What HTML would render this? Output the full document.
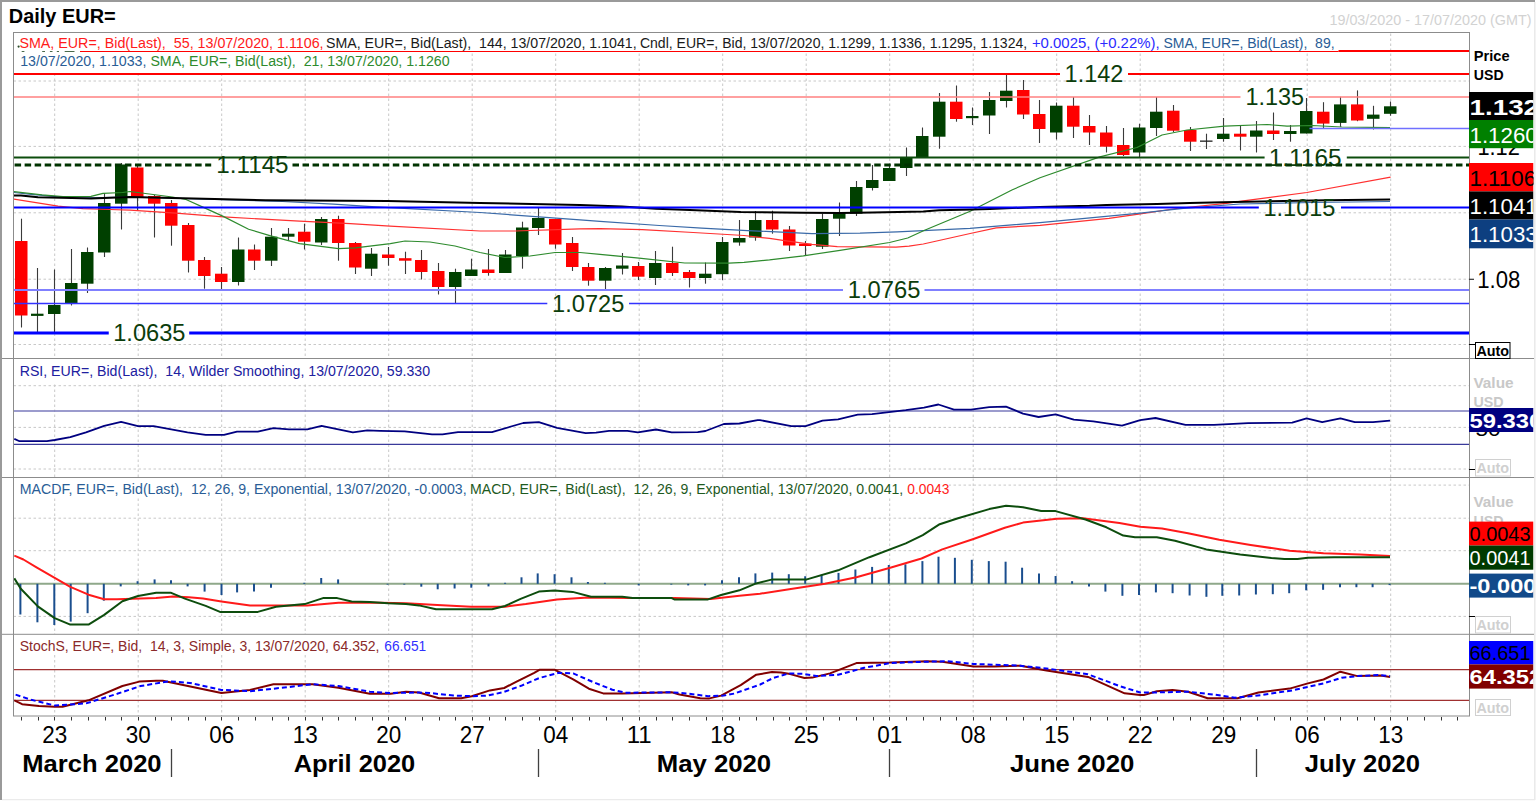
<!DOCTYPE html>
<html><head><meta charset="utf-8"><title>Daily EUR=</title>
<style>
html,body{margin:0;padding:0;background:#fff;width:1536px;height:801px;overflow:hidden}
svg{display:block;font-family:"Liberation Sans", sans-serif}
</style></head><body>
<svg width="1536" height="801" viewBox="0 0 1536 801">

<rect x="0.0" y="0.0" width="1536.0" height="801.0" fill="#ffffff"/>
<rect x="0.0" y="0.0" width="1535.0" height="2.0" fill="#9a9a9a"/>
<rect x="0.0" y="0.0" width="2.0" height="800.0" fill="#9a9a9a"/>
<line x1="1534.8" y1="2" x2="1534.8" y2="800" stroke="#e8e8e8" stroke-width="1.4"/>
<line x1="2" y1="799.6" x2="1535" y2="799.6" stroke="#ebebeb" stroke-width="1.3"/>
<text x="8.8" y="23.4" font-size="20.3" fill="#000000" font-weight="bold" textLength="106.9" lengthAdjust="spacingAndGlyphs" xml:space="preserve">Daily EUR=</text>
<text x="1329.4" y="25.0" font-size="14.8" fill="#d2d2d2" textLength="202.2" lengthAdjust="spacingAndGlyphs" xml:space="preserve">19/03/2020 - 17/07/2020 (GMT)</text>
<line x1="54.7" y1="33.5" x2="54.7" y2="358.5" stroke="#c8c8c8" stroke-width="1" stroke-dasharray="2.5,2.5"/>
<line x1="138.2" y1="33.5" x2="138.2" y2="358.5" stroke="#c8c8c8" stroke-width="1" stroke-dasharray="2.5,2.5"/>
<line x1="221.7" y1="33.5" x2="221.7" y2="358.5" stroke="#c8c8c8" stroke-width="1" stroke-dasharray="2.5,2.5"/>
<line x1="305.2" y1="33.5" x2="305.2" y2="358.5" stroke="#c8c8c8" stroke-width="1" stroke-dasharray="2.5,2.5"/>
<line x1="388.7" y1="33.5" x2="388.7" y2="358.5" stroke="#c8c8c8" stroke-width="1" stroke-dasharray="2.5,2.5"/>
<line x1="472.2" y1="33.5" x2="472.2" y2="358.5" stroke="#c8c8c8" stroke-width="1" stroke-dasharray="2.5,2.5"/>
<line x1="555.7" y1="33.5" x2="555.7" y2="358.5" stroke="#c8c8c8" stroke-width="1" stroke-dasharray="2.5,2.5"/>
<line x1="639.2" y1="33.5" x2="639.2" y2="358.5" stroke="#c8c8c8" stroke-width="1" stroke-dasharray="2.5,2.5"/>
<line x1="722.7" y1="33.5" x2="722.7" y2="358.5" stroke="#c8c8c8" stroke-width="1" stroke-dasharray="2.5,2.5"/>
<line x1="806.2" y1="33.5" x2="806.2" y2="358.5" stroke="#c8c8c8" stroke-width="1" stroke-dasharray="2.5,2.5"/>
<line x1="889.7" y1="33.5" x2="889.7" y2="358.5" stroke="#c8c8c8" stroke-width="1" stroke-dasharray="2.5,2.5"/>
<line x1="973.2" y1="33.5" x2="973.2" y2="358.5" stroke="#c8c8c8" stroke-width="1" stroke-dasharray="2.5,2.5"/>
<line x1="1056.7" y1="33.5" x2="1056.7" y2="358.5" stroke="#c8c8c8" stroke-width="1" stroke-dasharray="2.5,2.5"/>
<line x1="1140.2" y1="33.5" x2="1140.2" y2="358.5" stroke="#c8c8c8" stroke-width="1" stroke-dasharray="2.5,2.5"/>
<line x1="1223.7" y1="33.5" x2="1223.7" y2="358.5" stroke="#c8c8c8" stroke-width="1" stroke-dasharray="2.5,2.5"/>
<line x1="1307.2" y1="33.5" x2="1307.2" y2="358.5" stroke="#c8c8c8" stroke-width="1" stroke-dasharray="2.5,2.5"/>
<line x1="1390.7" y1="33.5" x2="1390.7" y2="358.5" stroke="#c8c8c8" stroke-width="1" stroke-dasharray="2.5,2.5"/>
<line x1="54.7" y1="359.5" x2="54.7" y2="477.5" stroke="#c8c8c8" stroke-width="1" stroke-dasharray="2.5,2.5"/>
<line x1="138.2" y1="359.5" x2="138.2" y2="477.5" stroke="#c8c8c8" stroke-width="1" stroke-dasharray="2.5,2.5"/>
<line x1="221.7" y1="359.5" x2="221.7" y2="477.5" stroke="#c8c8c8" stroke-width="1" stroke-dasharray="2.5,2.5"/>
<line x1="305.2" y1="359.5" x2="305.2" y2="477.5" stroke="#c8c8c8" stroke-width="1" stroke-dasharray="2.5,2.5"/>
<line x1="388.7" y1="359.5" x2="388.7" y2="477.5" stroke="#c8c8c8" stroke-width="1" stroke-dasharray="2.5,2.5"/>
<line x1="472.2" y1="359.5" x2="472.2" y2="477.5" stroke="#c8c8c8" stroke-width="1" stroke-dasharray="2.5,2.5"/>
<line x1="555.7" y1="359.5" x2="555.7" y2="477.5" stroke="#c8c8c8" stroke-width="1" stroke-dasharray="2.5,2.5"/>
<line x1="639.2" y1="359.5" x2="639.2" y2="477.5" stroke="#c8c8c8" stroke-width="1" stroke-dasharray="2.5,2.5"/>
<line x1="722.7" y1="359.5" x2="722.7" y2="477.5" stroke="#c8c8c8" stroke-width="1" stroke-dasharray="2.5,2.5"/>
<line x1="806.2" y1="359.5" x2="806.2" y2="477.5" stroke="#c8c8c8" stroke-width="1" stroke-dasharray="2.5,2.5"/>
<line x1="889.7" y1="359.5" x2="889.7" y2="477.5" stroke="#c8c8c8" stroke-width="1" stroke-dasharray="2.5,2.5"/>
<line x1="973.2" y1="359.5" x2="973.2" y2="477.5" stroke="#c8c8c8" stroke-width="1" stroke-dasharray="2.5,2.5"/>
<line x1="1056.7" y1="359.5" x2="1056.7" y2="477.5" stroke="#c8c8c8" stroke-width="1" stroke-dasharray="2.5,2.5"/>
<line x1="1140.2" y1="359.5" x2="1140.2" y2="477.5" stroke="#c8c8c8" stroke-width="1" stroke-dasharray="2.5,2.5"/>
<line x1="1223.7" y1="359.5" x2="1223.7" y2="477.5" stroke="#c8c8c8" stroke-width="1" stroke-dasharray="2.5,2.5"/>
<line x1="1307.2" y1="359.5" x2="1307.2" y2="477.5" stroke="#c8c8c8" stroke-width="1" stroke-dasharray="2.5,2.5"/>
<line x1="1390.7" y1="359.5" x2="1390.7" y2="477.5" stroke="#c8c8c8" stroke-width="1" stroke-dasharray="2.5,2.5"/>
<line x1="54.7" y1="478.5" x2="54.7" y2="634" stroke="#c8c8c8" stroke-width="1" stroke-dasharray="2.5,2.5"/>
<line x1="138.2" y1="478.5" x2="138.2" y2="634" stroke="#c8c8c8" stroke-width="1" stroke-dasharray="2.5,2.5"/>
<line x1="221.7" y1="478.5" x2="221.7" y2="634" stroke="#c8c8c8" stroke-width="1" stroke-dasharray="2.5,2.5"/>
<line x1="305.2" y1="478.5" x2="305.2" y2="634" stroke="#c8c8c8" stroke-width="1" stroke-dasharray="2.5,2.5"/>
<line x1="388.7" y1="478.5" x2="388.7" y2="634" stroke="#c8c8c8" stroke-width="1" stroke-dasharray="2.5,2.5"/>
<line x1="472.2" y1="478.5" x2="472.2" y2="634" stroke="#c8c8c8" stroke-width="1" stroke-dasharray="2.5,2.5"/>
<line x1="555.7" y1="478.5" x2="555.7" y2="634" stroke="#c8c8c8" stroke-width="1" stroke-dasharray="2.5,2.5"/>
<line x1="639.2" y1="478.5" x2="639.2" y2="634" stroke="#c8c8c8" stroke-width="1" stroke-dasharray="2.5,2.5"/>
<line x1="722.7" y1="478.5" x2="722.7" y2="634" stroke="#c8c8c8" stroke-width="1" stroke-dasharray="2.5,2.5"/>
<line x1="806.2" y1="478.5" x2="806.2" y2="634" stroke="#c8c8c8" stroke-width="1" stroke-dasharray="2.5,2.5"/>
<line x1="889.7" y1="478.5" x2="889.7" y2="634" stroke="#c8c8c8" stroke-width="1" stroke-dasharray="2.5,2.5"/>
<line x1="973.2" y1="478.5" x2="973.2" y2="634" stroke="#c8c8c8" stroke-width="1" stroke-dasharray="2.5,2.5"/>
<line x1="1056.7" y1="478.5" x2="1056.7" y2="634" stroke="#c8c8c8" stroke-width="1" stroke-dasharray="2.5,2.5"/>
<line x1="1140.2" y1="478.5" x2="1140.2" y2="634" stroke="#c8c8c8" stroke-width="1" stroke-dasharray="2.5,2.5"/>
<line x1="1223.7" y1="478.5" x2="1223.7" y2="634" stroke="#c8c8c8" stroke-width="1" stroke-dasharray="2.5,2.5"/>
<line x1="1307.2" y1="478.5" x2="1307.2" y2="634" stroke="#c8c8c8" stroke-width="1" stroke-dasharray="2.5,2.5"/>
<line x1="1390.7" y1="478.5" x2="1390.7" y2="634" stroke="#c8c8c8" stroke-width="1" stroke-dasharray="2.5,2.5"/>
<line x1="54.7" y1="635" x2="54.7" y2="716" stroke="#c8c8c8" stroke-width="1" stroke-dasharray="2.5,2.5"/>
<line x1="138.2" y1="635" x2="138.2" y2="716" stroke="#c8c8c8" stroke-width="1" stroke-dasharray="2.5,2.5"/>
<line x1="221.7" y1="635" x2="221.7" y2="716" stroke="#c8c8c8" stroke-width="1" stroke-dasharray="2.5,2.5"/>
<line x1="305.2" y1="635" x2="305.2" y2="716" stroke="#c8c8c8" stroke-width="1" stroke-dasharray="2.5,2.5"/>
<line x1="388.7" y1="635" x2="388.7" y2="716" stroke="#c8c8c8" stroke-width="1" stroke-dasharray="2.5,2.5"/>
<line x1="472.2" y1="635" x2="472.2" y2="716" stroke="#c8c8c8" stroke-width="1" stroke-dasharray="2.5,2.5"/>
<line x1="555.7" y1="635" x2="555.7" y2="716" stroke="#c8c8c8" stroke-width="1" stroke-dasharray="2.5,2.5"/>
<line x1="639.2" y1="635" x2="639.2" y2="716" stroke="#c8c8c8" stroke-width="1" stroke-dasharray="2.5,2.5"/>
<line x1="722.7" y1="635" x2="722.7" y2="716" stroke="#c8c8c8" stroke-width="1" stroke-dasharray="2.5,2.5"/>
<line x1="806.2" y1="635" x2="806.2" y2="716" stroke="#c8c8c8" stroke-width="1" stroke-dasharray="2.5,2.5"/>
<line x1="889.7" y1="635" x2="889.7" y2="716" stroke="#c8c8c8" stroke-width="1" stroke-dasharray="2.5,2.5"/>
<line x1="973.2" y1="635" x2="973.2" y2="716" stroke="#c8c8c8" stroke-width="1" stroke-dasharray="2.5,2.5"/>
<line x1="1056.7" y1="635" x2="1056.7" y2="716" stroke="#c8c8c8" stroke-width="1" stroke-dasharray="2.5,2.5"/>
<line x1="1140.2" y1="635" x2="1140.2" y2="716" stroke="#c8c8c8" stroke-width="1" stroke-dasharray="2.5,2.5"/>
<line x1="1223.7" y1="635" x2="1223.7" y2="716" stroke="#c8c8c8" stroke-width="1" stroke-dasharray="2.5,2.5"/>
<line x1="1307.2" y1="635" x2="1307.2" y2="716" stroke="#c8c8c8" stroke-width="1" stroke-dasharray="2.5,2.5"/>
<line x1="1390.7" y1="635" x2="1390.7" y2="716" stroke="#c8c8c8" stroke-width="1" stroke-dasharray="2.5,2.5"/>
<line x1="13.5" y1="81.0" x2="1469.5" y2="81.0" stroke="#c8c8c8" stroke-width="1" stroke-dasharray="2.5,2.5"/>
<line x1="13.5" y1="146.4" x2="1469.5" y2="146.4" stroke="#c8c8c8" stroke-width="1" stroke-dasharray="2.5,2.5"/>
<line x1="13.5" y1="212.8" x2="1469.5" y2="212.8" stroke="#c8c8c8" stroke-width="1" stroke-dasharray="2.5,2.5"/>
<line x1="13.5" y1="279.2" x2="1469.5" y2="279.2" stroke="#c8c8c8" stroke-width="1" stroke-dasharray="2.5,2.5"/>
<line x1="13.5" y1="344.5" x2="1469.5" y2="344.5" stroke="#c8c8c8" stroke-width="1" stroke-dasharray="2.5,2.5"/>
<line x1="13.5" y1="385.7" x2="1469.5" y2="385.7" stroke="#c8c8c8" stroke-width="1" stroke-dasharray="2.5,2.5"/>
<line x1="13.5" y1="427.4" x2="1469.5" y2="427.4" stroke="#c8c8c8" stroke-width="1" stroke-dasharray="2.5,2.5"/>
<line x1="13.5" y1="469" x2="1469.5" y2="469" stroke="#c8c8c8" stroke-width="1" stroke-dasharray="2.5,2.5"/>
<line x1="13.5" y1="485.1" x2="1469.5" y2="485.1" stroke="#c8c8c8" stroke-width="1" stroke-dasharray="2.5,2.5"/>
<line x1="13.5" y1="518.2" x2="1469.5" y2="518.2" stroke="#c8c8c8" stroke-width="1" stroke-dasharray="2.5,2.5"/>
<line x1="13.5" y1="550.7" x2="1469.5" y2="550.7" stroke="#c8c8c8" stroke-width="1" stroke-dasharray="2.5,2.5"/>
<line x1="13.5" y1="616.4" x2="1469.5" y2="616.4" stroke="#c8c8c8" stroke-width="1" stroke-dasharray="2.5,2.5"/>
<defs><clipPath id="cp1"><rect x="14" y="33" width="1455" height="325"/></clipPath><clipPath id="cp2"><rect x="14" y="359" width="1455" height="118"/></clipPath><clipPath id="cp3"><rect x="14" y="478" width="1455" height="156"/></clipPath><clipPath id="cp4"><rect x="14" y="634" width="1455" height="82"/></clipPath></defs>
<g clip-path="url(#cp1)">
<line x1="80" y1="51.5" x2="1338.3" y2="51.5" stroke="#ff0000" stroke-width="1"/>
<line x1="1338.3" y1="51" x2="1469" y2="51" stroke="#ff0000" stroke-width="2"/>
<line x1="21.5" y1="218.7" x2="21.5" y2="327.5" stroke="#3a3a3a" stroke-width="1.1"/>
<rect x="15.0" y="241.0" width="12.5" height="74.5" fill="#ff0000"/>
<line x1="37.5" y1="268.0" x2="37.5" y2="332.0" stroke="#3a3a3a" stroke-width="1.1"/>
<rect x="31.0" y="313.7" width="12.5" height="2.2" fill="#004000"/>
<line x1="54.5" y1="269.5" x2="54.5" y2="332.0" stroke="#3a3a3a" stroke-width="1.1"/>
<rect x="48.0" y="305.0" width="12.5" height="9.0" fill="#004000"/>
<line x1="71.5" y1="249.0" x2="71.5" y2="305.5" stroke="#3a3a3a" stroke-width="1.1"/>
<rect x="65.0" y="283.0" width="12.5" height="20.5" fill="#004000"/>
<line x1="87.5" y1="247.5" x2="87.5" y2="293.0" stroke="#3a3a3a" stroke-width="1.1"/>
<rect x="81.0" y="252.0" width="12.5" height="31.7" fill="#004000"/>
<line x1="104.5" y1="193.0" x2="104.5" y2="257.0" stroke="#3a3a3a" stroke-width="1.1"/>
<rect x="98.0" y="203.0" width="12.5" height="49.5" fill="#004000"/>
<line x1="121.5" y1="163.0" x2="121.5" y2="229.5" stroke="#3a3a3a" stroke-width="1.1"/>
<rect x="115.0" y="164.5" width="12.5" height="39.2" fill="#004000"/>
<line x1="137.5" y1="164.5" x2="137.5" y2="210.5" stroke="#3a3a3a" stroke-width="1.1"/>
<rect x="131.0" y="167.5" width="12.5" height="30.0" fill="#ff0000"/>
<line x1="154.5" y1="195.0" x2="154.5" y2="237.5" stroke="#3a3a3a" stroke-width="1.1"/>
<rect x="148.0" y="196.0" width="12.5" height="7.7" fill="#ff0000"/>
<line x1="171.5" y1="200.0" x2="171.5" y2="245.7" stroke="#3a3a3a" stroke-width="1.1"/>
<rect x="165.0" y="203.0" width="12.5" height="22.7" fill="#ff0000"/>
<line x1="188.5" y1="223.0" x2="188.5" y2="272.5" stroke="#3a3a3a" stroke-width="1.1"/>
<rect x="182.0" y="225.0" width="12.5" height="35.7" fill="#ff0000"/>
<line x1="204.5" y1="257.0" x2="204.5" y2="288.7" stroke="#3a3a3a" stroke-width="1.1"/>
<rect x="198.0" y="260.0" width="12.5" height="16.0" fill="#ff0000"/>
<line x1="221.5" y1="267.0" x2="221.5" y2="290.0" stroke="#3a3a3a" stroke-width="1.1"/>
<rect x="215.0" y="273.7" width="12.5" height="8.3" fill="#ff0000"/>
<line x1="238.5" y1="237.5" x2="238.5" y2="285.5" stroke="#3a3a3a" stroke-width="1.1"/>
<rect x="232.0" y="249.5" width="12.5" height="32.5" fill="#004000"/>
<line x1="254.5" y1="244.5" x2="254.5" y2="270.0" stroke="#3a3a3a" stroke-width="1.1"/>
<rect x="248.0" y="249.5" width="12.5" height="11.2" fill="#ff0000"/>
<line x1="271.5" y1="228.0" x2="271.5" y2="266.0" stroke="#3a3a3a" stroke-width="1.1"/>
<rect x="265.0" y="236.7" width="12.5" height="24.0" fill="#004000"/>
<line x1="288.5" y1="228.0" x2="288.5" y2="240.0" stroke="#3a3a3a" stroke-width="1.1"/>
<rect x="282.0" y="233.7" width="12.5" height="3.0" fill="#004000"/>
<line x1="304.5" y1="223.7" x2="304.5" y2="249.5" stroke="#3a3a3a" stroke-width="1.1"/>
<rect x="298.0" y="231.7" width="12.5" height="10.0" fill="#ff0000"/>
<line x1="321.5" y1="217.0" x2="321.5" y2="245.0" stroke="#3a3a3a" stroke-width="1.1"/>
<rect x="315.0" y="219.0" width="12.5" height="23.5" fill="#004000"/>
<line x1="338.5" y1="215.7" x2="338.5" y2="260.7" stroke="#3a3a3a" stroke-width="1.1"/>
<rect x="332.0" y="219.0" width="12.5" height="24.0" fill="#ff0000"/>
<line x1="355.5" y1="242.0" x2="355.5" y2="274.0" stroke="#3a3a3a" stroke-width="1.1"/>
<rect x="349.0" y="243.0" width="12.5" height="24.5" fill="#ff0000"/>
<line x1="371.5" y1="248.0" x2="371.5" y2="276.0" stroke="#3a3a3a" stroke-width="1.1"/>
<rect x="365.0" y="253.7" width="12.5" height="15.0" fill="#004000"/>
<line x1="388.5" y1="247.0" x2="388.5" y2="265.7" stroke="#3a3a3a" stroke-width="1.1"/>
<rect x="382.0" y="254.5" width="12.5" height="3.5" fill="#ff0000"/>
<line x1="405.5" y1="251.7" x2="405.5" y2="274.0" stroke="#3a3a3a" stroke-width="1.1"/>
<rect x="399.0" y="258.2" width="12.5" height="2.5" fill="#ff0000"/>
<line x1="421.5" y1="250.0" x2="421.5" y2="279.5" stroke="#3a3a3a" stroke-width="1.1"/>
<rect x="415.0" y="260.0" width="12.5" height="12.0" fill="#ff0000"/>
<line x1="438.5" y1="263.0" x2="438.5" y2="294.5" stroke="#3a3a3a" stroke-width="1.1"/>
<rect x="432.0" y="271.0" width="12.5" height="16.0" fill="#ff0000"/>
<line x1="455.5" y1="268.7" x2="455.5" y2="303.0" stroke="#3a3a3a" stroke-width="1.1"/>
<rect x="449.0" y="272.0" width="12.5" height="15.0" fill="#004000"/>
<line x1="471.5" y1="258.7" x2="471.5" y2="276.0" stroke="#3a3a3a" stroke-width="1.1"/>
<rect x="465.0" y="269.5" width="12.5" height="6.5" fill="#004000"/>
<line x1="488.5" y1="249.0" x2="488.5" y2="275.7" stroke="#3a3a3a" stroke-width="1.1"/>
<rect x="482.0" y="269.5" width="12.5" height="3.5" fill="#ff0000"/>
<line x1="505.5" y1="250.0" x2="505.5" y2="273.0" stroke="#3a3a3a" stroke-width="1.1"/>
<rect x="499.0" y="254.5" width="12.5" height="18.5" fill="#004000"/>
<line x1="522.5" y1="221.7" x2="522.5" y2="268.7" stroke="#3a3a3a" stroke-width="1.1"/>
<rect x="516.0" y="227.5" width="12.5" height="28.5" fill="#004000"/>
<line x1="538.5" y1="208.0" x2="538.5" y2="235.0" stroke="#3a3a3a" stroke-width="1.1"/>
<rect x="532.0" y="218.0" width="12.5" height="10.0" fill="#004000"/>
<line x1="555.5" y1="218.7" x2="555.5" y2="248.7" stroke="#3a3a3a" stroke-width="1.1"/>
<rect x="549.0" y="219.0" width="12.5" height="25.5" fill="#ff0000"/>
<line x1="572.5" y1="237.0" x2="572.5" y2="271.0" stroke="#3a3a3a" stroke-width="1.1"/>
<rect x="566.0" y="243.0" width="12.5" height="24.0" fill="#ff0000"/>
<line x1="588.5" y1="263.0" x2="588.5" y2="285.7" stroke="#3a3a3a" stroke-width="1.1"/>
<rect x="582.0" y="267.0" width="12.5" height="13.7" fill="#ff0000"/>
<line x1="605.5" y1="267.0" x2="605.5" y2="290.0" stroke="#3a3a3a" stroke-width="1.1"/>
<rect x="599.0" y="268.0" width="12.5" height="12.7" fill="#004000"/>
<line x1="622.5" y1="253.0" x2="622.5" y2="274.5" stroke="#3a3a3a" stroke-width="1.1"/>
<rect x="616.0" y="265.5" width="12.5" height="3.2" fill="#004000"/>
<line x1="638.5" y1="262.0" x2="638.5" y2="280.0" stroke="#3a3a3a" stroke-width="1.1"/>
<rect x="632.0" y="266.0" width="12.5" height="10.7" fill="#ff0000"/>
<line x1="655.5" y1="251.0" x2="655.5" y2="285.0" stroke="#3a3a3a" stroke-width="1.1"/>
<rect x="649.0" y="263.0" width="12.5" height="15.0" fill="#004000"/>
<line x1="672.5" y1="246.7" x2="672.5" y2="276.0" stroke="#3a3a3a" stroke-width="1.1"/>
<rect x="666.0" y="263.0" width="12.5" height="10.0" fill="#ff0000"/>
<line x1="689.5" y1="270.0" x2="689.5" y2="287.5" stroke="#3a3a3a" stroke-width="1.1"/>
<rect x="683.0" y="272.0" width="12.5" height="6.0" fill="#ff0000"/>
<line x1="705.5" y1="262.5" x2="705.5" y2="283.7" stroke="#3a3a3a" stroke-width="1.1"/>
<rect x="699.0" y="273.7" width="12.5" height="4.3" fill="#004000"/>
<line x1="722.5" y1="237.0" x2="722.5" y2="280.0" stroke="#3a3a3a" stroke-width="1.1"/>
<rect x="716.0" y="242.0" width="12.5" height="32.2" fill="#004000"/>
<line x1="739.5" y1="220.0" x2="739.5" y2="245.7" stroke="#3a3a3a" stroke-width="1.1"/>
<rect x="733.0" y="238.0" width="12.5" height="4.5" fill="#004000"/>
<line x1="755.5" y1="211.0" x2="755.5" y2="240.7" stroke="#3a3a3a" stroke-width="1.1"/>
<rect x="749.0" y="220.0" width="12.5" height="17.5" fill="#004000"/>
<line x1="772.5" y1="210.7" x2="772.5" y2="233.7" stroke="#3a3a3a" stroke-width="1.1"/>
<rect x="766.0" y="220.0" width="12.5" height="9.5" fill="#ff0000"/>
<line x1="789.5" y1="226.0" x2="789.5" y2="251.0" stroke="#3a3a3a" stroke-width="1.1"/>
<rect x="783.0" y="229.5" width="12.5" height="16.0" fill="#ff0000"/>
<line x1="805.5" y1="241.0" x2="805.5" y2="255.0" stroke="#3a3a3a" stroke-width="1.1"/>
<rect x="799.0" y="243.7" width="12.5" height="2.3" fill="#ff0000"/>
<line x1="822.5" y1="213.7" x2="822.5" y2="249.0" stroke="#3a3a3a" stroke-width="1.1"/>
<rect x="816.0" y="219.0" width="12.5" height="27.7" fill="#004000"/>
<line x1="839.5" y1="202.5" x2="839.5" y2="236.0" stroke="#3a3a3a" stroke-width="1.1"/>
<rect x="833.0" y="212.0" width="12.5" height="6.7" fill="#004000"/>
<line x1="856.5" y1="181.0" x2="856.5" y2="216.0" stroke="#3a3a3a" stroke-width="1.1"/>
<rect x="850.0" y="187.0" width="12.5" height="26.7" fill="#004000"/>
<line x1="872.5" y1="165.0" x2="872.5" y2="190.5" stroke="#3a3a3a" stroke-width="1.1"/>
<rect x="866.0" y="180.0" width="12.5" height="8.0" fill="#004000"/>
<line x1="889.5" y1="163.7" x2="889.5" y2="181.0" stroke="#3a3a3a" stroke-width="1.1"/>
<rect x="883.0" y="168.0" width="12.5" height="13.0" fill="#004000"/>
<line x1="906.5" y1="147.5" x2="906.5" y2="176.0" stroke="#3a3a3a" stroke-width="1.1"/>
<rect x="900.0" y="157.0" width="12.5" height="11.0" fill="#004000"/>
<line x1="922.5" y1="127.5" x2="922.5" y2="157.5" stroke="#3a3a3a" stroke-width="1.1"/>
<rect x="916.0" y="136.0" width="12.5" height="21.5" fill="#004000"/>
<line x1="939.5" y1="93.0" x2="939.5" y2="148.7" stroke="#3a3a3a" stroke-width="1.1"/>
<rect x="933.0" y="101.7" width="12.5" height="35.0" fill="#004000"/>
<line x1="956.5" y1="85.5" x2="956.5" y2="121.7" stroke="#3a3a3a" stroke-width="1.1"/>
<rect x="950.0" y="101.7" width="12.5" height="17.3" fill="#ff0000"/>
<line x1="972.5" y1="107.5" x2="972.5" y2="125.0" stroke="#3a3a3a" stroke-width="1.1"/>
<rect x="966.0" y="116.0" width="12.5" height="2.2" fill="#004000"/>
<line x1="989.5" y1="92.0" x2="989.5" y2="134.0" stroke="#3a3a3a" stroke-width="1.1"/>
<rect x="983.0" y="100.0" width="12.5" height="15.5" fill="#004000"/>
<line x1="1006.5" y1="73.7" x2="1006.5" y2="107.5" stroke="#3a3a3a" stroke-width="1.1"/>
<rect x="1000.0" y="90.7" width="12.5" height="10.3" fill="#004000"/>
<line x1="1023.5" y1="80.0" x2="1023.5" y2="119.0" stroke="#3a3a3a" stroke-width="1.1"/>
<rect x="1017.0" y="90.0" width="12.5" height="24.5" fill="#ff0000"/>
<line x1="1039.5" y1="100.0" x2="1039.5" y2="143.0" stroke="#3a3a3a" stroke-width="1.1"/>
<rect x="1033.0" y="114.0" width="12.5" height="15.0" fill="#ff0000"/>
<line x1="1056.5" y1="102.5" x2="1056.5" y2="139.5" stroke="#3a3a3a" stroke-width="1.1"/>
<rect x="1050.0" y="105.7" width="12.5" height="26.8" fill="#004000"/>
<line x1="1073.5" y1="97.0" x2="1073.5" y2="138.0" stroke="#3a3a3a" stroke-width="1.1"/>
<rect x="1067.0" y="105.7" width="12.5" height="21.0" fill="#ff0000"/>
<line x1="1089.5" y1="115.0" x2="1089.5" y2="145.0" stroke="#3a3a3a" stroke-width="1.1"/>
<rect x="1083.0" y="126.0" width="12.5" height="6.5" fill="#ff0000"/>
<line x1="1106.5" y1="126.0" x2="1106.5" y2="152.5" stroke="#3a3a3a" stroke-width="1.1"/>
<rect x="1100.0" y="132.5" width="12.5" height="14.2" fill="#ff0000"/>
<line x1="1123.5" y1="128.0" x2="1123.5" y2="156.0" stroke="#3a3a3a" stroke-width="1.1"/>
<rect x="1117.0" y="145.0" width="12.5" height="10.0" fill="#ff0000"/>
<line x1="1139.5" y1="123.7" x2="1139.5" y2="157.0" stroke="#3a3a3a" stroke-width="1.1"/>
<rect x="1133.0" y="127.5" width="12.5" height="25.0" fill="#004000"/>
<line x1="1156.5" y1="97.0" x2="1156.5" y2="136.0" stroke="#3a3a3a" stroke-width="1.1"/>
<rect x="1150.0" y="111.7" width="12.5" height="16.3" fill="#004000"/>
<line x1="1173.5" y1="105.0" x2="1173.5" y2="132.0" stroke="#3a3a3a" stroke-width="1.1"/>
<rect x="1167.0" y="110.7" width="12.5" height="20.0" fill="#ff0000"/>
<line x1="1190.5" y1="127.0" x2="1190.5" y2="151.0" stroke="#3a3a3a" stroke-width="1.1"/>
<rect x="1184.0" y="130.0" width="12.5" height="11.7" fill="#ff0000"/>
<line x1="1206.5" y1="133.7" x2="1206.5" y2="149.0" stroke="#3a3a3a" stroke-width="1.1"/>
<rect x="1200.0" y="140.5" width="12.5" height="1.3" fill="#222222"/>
<line x1="1223.5" y1="118.0" x2="1223.5" y2="141.7" stroke="#3a3a3a" stroke-width="1.1"/>
<rect x="1217.0" y="133.7" width="12.5" height="5.3" fill="#004000"/>
<line x1="1240.5" y1="126.0" x2="1240.5" y2="150.5" stroke="#3a3a3a" stroke-width="1.1"/>
<rect x="1234.0" y="133.7" width="12.5" height="3.0" fill="#ff0000"/>
<line x1="1256.5" y1="121.0" x2="1256.5" y2="152.5" stroke="#3a3a3a" stroke-width="1.1"/>
<rect x="1250.0" y="130.5" width="12.5" height="6.2" fill="#004000"/>
<line x1="1273.5" y1="112.5" x2="1273.5" y2="140.0" stroke="#3a3a3a" stroke-width="1.1"/>
<rect x="1267.0" y="130.5" width="12.5" height="3.5" fill="#ff0000"/>
<line x1="1290.5" y1="125.0" x2="1290.5" y2="141.7" stroke="#3a3a3a" stroke-width="1.1"/>
<rect x="1284.0" y="131.0" width="12.5" height="3.0" fill="#004000"/>
<line x1="1306.5" y1="98.0" x2="1306.5" y2="133.5" stroke="#3a3a3a" stroke-width="1.1"/>
<rect x="1300.0" y="111.0" width="12.5" height="22.5" fill="#004000"/>
<line x1="1323.5" y1="102.2" x2="1323.5" y2="128.8" stroke="#3a3a3a" stroke-width="1.1"/>
<rect x="1317.0" y="111.7" width="12.5" height="11.9" fill="#ff0000"/>
<line x1="1340.5" y1="96.8" x2="1340.5" y2="126.9" stroke="#3a3a3a" stroke-width="1.1"/>
<rect x="1334.0" y="104.4" width="12.5" height="18.5" fill="#004000"/>
<line x1="1357.5" y1="90.4" x2="1357.5" y2="121.2" stroke="#3a3a3a" stroke-width="1.1"/>
<rect x="1351.0" y="104.4" width="12.5" height="16.1" fill="#ff0000"/>
<line x1="1373.5" y1="105.8" x2="1373.5" y2="129.5" stroke="#3a3a3a" stroke-width="1.1"/>
<rect x="1367.0" y="114.6" width="12.5" height="4.2" fill="#004000"/>
<line x1="1390.5" y1="101.5" x2="1390.5" y2="115.7" stroke="#3a3a3a" stroke-width="1.1"/>
<rect x="1384.0" y="106.3" width="12.5" height="7.5" fill="#004000"/>
<polyline points="13.8,199.0 58.0,206.2 83.0,208.6 110.0,209.5 130.0,210.2 175.8,213.2 223.2,216.9 299.5,221.2 350.3,223.7 390.0,226.1 480.0,231.0 515.0,231.0 580.0,228.8 600.0,228.6 642.4,229.7 693.2,232.5 744.0,235.5 769.5,238.4 786.4,240.9 811.9,244.3 837.3,246.6 896.0,247.2 909.0,246.2 923.3,244.0 970.2,233.5 996.2,227.9 1040.0,225.3 1109.0,218.3 1140.3,213.9 1176.7,208.5 1226.2,203.3 1243.4,200.8 1306.8,192.5 1390.6,177.1" fill="none" stroke="#ff3030" stroke-width="1.2" stroke-linejoin="round"/>
<polyline points="13.8,192.5 31.0,194.3 72.0,198.0 130.0,197.0 214.7,199.3 282.5,201.5 333.4,204.2 375.8,206.8 480.0,212.5 580.0,219.8 600.0,221.3 659.3,225.5 701.7,228.2 747.5,230.6 766.0,231.4 811.9,233.6 860.0,233.1 897.3,231.8 970.0,228.3 1040.0,222.7 1140.3,213.1 1183.2,208.4 1240.0,204.0 1312.0,202.5 1390.0,201.5" fill="none" stroke="#3a6aa8" stroke-width="1.2" stroke-linejoin="round"/>
<polyline points="13.8,191.5 42.0,194.8 63.0,196.6 91.0,196.4 103.0,193.4 122.5,192.5 130.0,191.5 172.4,197.0 186.0,199.5 202.9,207.1 223.2,216.4 248.6,229.2 270.7,235.9 299.5,243.6 338.5,248.6 355.4,247.8 390.3,243.6 405.0,241.0 430.0,242.0 455.0,246.0 480.0,252.5 505.0,257.5 530.0,256.0 555.0,252.5 580.0,252.5 600.0,254.3 639.0,258.1 684.7,263.0 728.8,263.1 744.0,262.3 769.5,259.9 803.4,255.8 840.0,250.4 889.5,242.5 907.7,238.0 924.6,230.3 970.2,211.3 1011.9,190.0 1040.0,177.8 1099.9,156.9 1137.0,147.5 1162.0,135.0 1187.0,130.0 1224.5,126.2 1267.0,124.5 1287.0,126.2 1312.0,125.5 1342.0,127.0 1390.0,127.6" fill="none" stroke="#2e8b2e" stroke-width="1.2" stroke-linejoin="round"/>
<polyline points="13.8,195.6 21.0,195.6 38.0,197.3 72.0,197.9 91.0,198.5 130.0,197.0 214.7,199.0 265.6,200.3 387.6,201.0 480.0,203.0 580.0,205.0 622.0,206.4 656.0,208.7 689.8,209.9 740.7,211.9 803.4,212.8 840.0,213.1 872.5,212.5 923.3,211.6 939.0,210.3 972.8,209.5 989.7,208.9 1040.0,207.0 1089.5,205.8 1106.4,205.0 1157.2,204.1 1189.7,203.0 1222.3,202.2 1325.5,200.2 1390.0,199.6" fill="none" stroke="#000000" stroke-width="2" stroke-linejoin="round"/>
<line x1="13" y1="74" x2="1060" y2="74" stroke="#ff0000" stroke-width="2"/>
<line x1="1128" y1="74" x2="1469" y2="74" stroke="#ff0000" stroke-width="2"/>
<line x1="13" y1="97" x2="1240.5" y2="97" stroke="#ff8080" stroke-width="1.5"/>
<line x1="1308.7" y1="97" x2="1469" y2="97" stroke="#ff8080" stroke-width="1.5"/>
<line x1="1309.5" y1="128.6" x2="1469" y2="128.6" stroke="#7070ff" stroke-width="1.5"/>
<line x1="13" y1="157.5" x2="1264.6" y2="157.5" stroke="#0d4d0d" stroke-width="2.2"/>
<line x1="1346.8" y1="157.5" x2="1469" y2="157.5" stroke="#0d4d0d" stroke-width="2.2"/>
<line x1="14.6" y1="165" x2="211.2" y2="165" stroke="#003300" stroke-width="2.8" stroke-dasharray="6.5,3.53"/>
<line x1="292.5" y1="165" x2="1469" y2="165" stroke="#003300" stroke-width="2.8" stroke-dasharray="6.5,3.53"/>
<line x1="13" y1="207.5" x2="1258.8" y2="207.5" stroke="#0000ff" stroke-width="2"/>
<line x1="1341" y1="207.5" x2="1469" y2="207.5" stroke="#0000ff" stroke-width="2"/>
<line x1="13" y1="290" x2="843" y2="290" stroke="#8080ff" stroke-width="2"/>
<line x1="924.5" y1="290" x2="1469" y2="290" stroke="#8080ff" stroke-width="2"/>
<line x1="13" y1="303.5" x2="547.3" y2="303.5" stroke="#3333ff" stroke-width="1.5"/>
<line x1="629" y1="303.5" x2="1469" y2="303.5" stroke="#3333ff" stroke-width="1.5"/>
<line x1="13" y1="333" x2="108.75" y2="333" stroke="#0000ff" stroke-width="3.2"/>
<line x1="189.2" y1="333" x2="1469" y2="333" stroke="#0000ff" stroke-width="3.2"/>
<text x="1064.6" y="82.3" font-size="23.7" fill="#0b3d0b" textLength="58.7" lengthAdjust="spacingAndGlyphs" xml:space="preserve">1.142</text>
<text x="1245.4" y="104.8" font-size="23.7" fill="#0b3d0b" textLength="58.6" lengthAdjust="spacingAndGlyphs" xml:space="preserve">1.135</text>
<text x="1268.7" y="165.7" font-size="23" fill="#0b3d0b" textLength="72.9" lengthAdjust="spacingAndGlyphs" xml:space="preserve">1.1165</text>
<text x="216.3" y="172.8" font-size="23" fill="#0b3d0b" textLength="72.3" lengthAdjust="spacingAndGlyphs" xml:space="preserve">1.1145</text>
<text x="1263.4" y="215.5" font-size="23" fill="#0b3d0b" textLength="72.1" lengthAdjust="spacingAndGlyphs" xml:space="preserve">1.1015</text>
<text x="847.8" y="298.0" font-size="23.7" fill="#0b3d0b" textLength="72.6" lengthAdjust="spacingAndGlyphs" xml:space="preserve">1.0765</text>
<text x="552.1" y="311.6" font-size="23.7" fill="#0b3d0b" textLength="72.2" lengthAdjust="spacingAndGlyphs" xml:space="preserve">1.0725</text>
<text x="113.2" y="340.8" font-size="23.7" fill="#0b3d0b" textLength="72.3" lengthAdjust="spacingAndGlyphs" xml:space="preserve">1.0635</text>
</g>
<rect x="14.0" y="33.0" width="1324.3" height="18.0" fill="#ffffff"/>
<rect x="14.0" y="52.0" width="435.0" height="21.0" fill="#ffffff"/>
<circle cx="18.6" cy="46.6" r="1.1" fill="#2a4a2a"/>
<line x1="21.7" y1="51.5" x2="24.4" y2="51.5" stroke="#4a6a4a" stroke-width="1"/>
<line x1="42.2" y1="51.5" x2="45" y2="51.5" stroke="#4a6a4a" stroke-width="1"/>
<line x1="49.9" y1="51.5" x2="52.5" y2="51.5" stroke="#4a6a4a" stroke-width="1"/>
<line x1="56.8" y1="51.5" x2="59" y2="51.5" stroke="#4a6a4a" stroke-width="1"/>
<line x1="64.7" y1="51.5" x2="74.5" y2="51.5" stroke="#4a6a4a" stroke-width="1"/>
<text x="19.4" y="48.0" font-size="13.8" fill="#ff1a1a" textLength="304.2" lengthAdjust="spacingAndGlyphs" xml:space="preserve">SMA, EUR=, Bid(Last),  55, 13/07/2020, 1.1106,</text>
<text x="326.0" y="48.0" font-size="13.8" fill="#1a1a1a" textLength="310.6" lengthAdjust="spacingAndGlyphs" xml:space="preserve">SMA, EUR=, Bid(Last),  144, 13/07/2020, 1.1041,</text>
<text x="639.9" y="48.0" font-size="13.8" fill="#1a1a1a" textLength="387.3" lengthAdjust="spacingAndGlyphs" xml:space="preserve">Cndl, EUR=, Bid, 13/07/2020, 1.1299, 1.1336, 1.1295, 1.1324,</text>
<text x="1031.9" y="48.0" font-size="13.8" fill="#2b2bff" textLength="127.7" lengthAdjust="spacingAndGlyphs" xml:space="preserve">+0.0025, (+0.22%),</text>
<text x="1163.4" y="48.0" font-size="13.8" fill="#2a5d96" textLength="171.2" lengthAdjust="spacingAndGlyphs" xml:space="preserve">SMA, EUR=, Bid(Last),  89,</text>
<text x="20.2" y="66.0" font-size="13.8" fill="#2a5d96" textLength="126.2" lengthAdjust="spacingAndGlyphs" xml:space="preserve">13/07/2020, 1.1033,</text>
<text x="150.4" y="66.0" font-size="13.8" fill="#2e8b2e" textLength="299.2" lengthAdjust="spacingAndGlyphs" xml:space="preserve">SMA, EUR=, Bid(Last),  21, 13/07/2020, 1.1260</text>
<g clip-path="url(#cp2)">
<line x1="13" y1="411" x2="1469" y2="411" stroke="#7a7abc" stroke-width="1.4"/>
<line x1="13" y1="444.3" x2="1469" y2="444.3" stroke="#3a3a9a" stroke-width="1.2"/>
<polyline points="14.3,438.9 19.5,441.2 46.9,441.2 54.7,440.0 70.3,437.2 86.0,432.3 104.2,425.8 121.1,421.9 138.0,426.1 153.6,426.1 187.5,432.3 205.7,434.9 224.0,434.9 237.0,431.6 257.8,431.6 273.4,428.1 289.0,429.4 307.3,429.4 321.6,425.8 335.9,428.8 352.9,432.3 367.2,430.3 380.0,430.8 404.7,431.3 432.0,434.4 442.5,434.4 458.0,432.1 492.0,432.1 523.2,423.0 538.8,422.2 557.0,427.9 585.7,433.1 596.0,432.6 609.0,430.8 627.4,430.8 637.8,432.3 656.0,429.5 671.7,432.3 697.7,432.1 705.5,431.0 723.8,424.0 739.4,423.5 757.6,420.1 760.0,420.1 791.2,426.1 805.6,426.1 822.5,420.6 838.1,419.3 857.7,414.6 872.0,414.1 905.8,410.2 924.0,407.6 938.4,404.5 954.0,409.7 971.0,409.7 989.2,407.1 1006.0,406.6 1023.0,413.6 1038.6,417.0 1055.6,414.4 1073.8,419.6 1093.3,421.4 1122.0,425.6 1140.2,420.1 1155.5,418.0 1185.5,424.8 1214.0,424.8 1248.0,423.2 1292.2,422.7 1306.6,418.3 1322.2,422.2 1340.4,418.3 1354.8,422.2 1373.0,422.2 1390.0,420.6" fill="none" stroke="#000080" stroke-width="1.8" stroke-linejoin="round"/>
</g>
<rect x="14.0" y="359.0" width="416.0" height="23.0" fill="#fff"/>
<text x="19.7" y="376.4" font-size="13.8" fill="#2020a0" textLength="410.4" lengthAdjust="spacingAndGlyphs" xml:space="preserve">RSI, EUR=, Bid(Last),  14, Wilder Smoothing, 13/07/2020, 59.330</text>
<g clip-path="url(#cp3)">
<line x1="13" y1="583.8" x2="1469" y2="583.8" stroke="#8fa88a" stroke-width="2"/>
<line x1="20.4" y1="583.8" x2="20.4" y2="614.5" stroke="#1a4e8e" stroke-width="2"/>
<line x1="37.4" y1="583.8" x2="37.4" y2="622.3" stroke="#1a4e8e" stroke-width="2"/>
<line x1="54.3" y1="583.8" x2="54.3" y2="625" stroke="#1a4e8e" stroke-width="2"/>
<line x1="70.7" y1="583.8" x2="70.7" y2="621.6" stroke="#1a4e8e" stroke-width="2"/>
<line x1="87.6" y1="583.8" x2="87.6" y2="613.2" stroke="#1a4e8e" stroke-width="2"/>
<line x1="103.8" y1="583.8" x2="103.8" y2="600.7" stroke="#1a4e8e" stroke-width="2"/>
<line x1="120.7" y1="583.8" x2="120.7" y2="586.4" stroke="#1a4e8e" stroke-width="2"/>
<line x1="137.6" y1="583.8" x2="137.6" y2="581.2" stroke="#1a4e8e" stroke-width="2"/>
<line x1="154.6" y1="583.8" x2="154.6" y2="579.4" stroke="#1a4e8e" stroke-width="2"/>
<line x1="171.0" y1="583.8" x2="171.0" y2="580.2" stroke="#1a4e8e" stroke-width="2"/>
<line x1="187.6" y1="583.8" x2="187.6" y2="586.4" stroke="#1a4e8e" stroke-width="2"/>
<line x1="204.6" y1="583.8" x2="204.6" y2="591.6" stroke="#1a4e8e" stroke-width="2"/>
<line x1="221.5" y1="583.8" x2="221.5" y2="595" stroke="#1a4e8e" stroke-width="2"/>
<line x1="237.1" y1="583.8" x2="237.1" y2="592.4" stroke="#1a4e8e" stroke-width="2"/>
<line x1="254.0" y1="583.8" x2="254.0" y2="591.6" stroke="#1a4e8e" stroke-width="2"/>
<line x1="271.0" y1="583.8" x2="271.0" y2="587.7" stroke="#1a4e8e" stroke-width="2"/>
<line x1="304.3" y1="583.8" x2="304.3" y2="582.8" stroke="#1a4e8e" stroke-width="2"/>
<line x1="321.2" y1="583.8" x2="321.2" y2="578" stroke="#1a4e8e" stroke-width="2"/>
<line x1="338.1" y1="583.8" x2="338.1" y2="579.4" stroke="#1a4e8e" stroke-width="2"/>
<line x1="387.6" y1="583.8" x2="387.6" y2="584.6" stroke="#1a4e8e" stroke-width="2"/>
<line x1="404.3" y1="583.8" x2="404.3" y2="584.6" stroke="#1a4e8e" stroke-width="2"/>
<line x1="421.3" y1="583.8" x2="421.3" y2="586.7" stroke="#1a4e8e" stroke-width="2"/>
<line x1="437.7" y1="583.8" x2="437.7" y2="589.3" stroke="#1a4e8e" stroke-width="2"/>
<line x1="454.6" y1="583.8" x2="454.6" y2="588.5" stroke="#1a4e8e" stroke-width="2"/>
<line x1="471.3" y1="583.8" x2="471.3" y2="587.7" stroke="#1a4e8e" stroke-width="2"/>
<line x1="488.5" y1="583.8" x2="488.5" y2="586.4" stroke="#1a4e8e" stroke-width="2"/>
<line x1="505.1" y1="583.8" x2="505.1" y2="582.8" stroke="#1a4e8e" stroke-width="2"/>
<line x1="521.5" y1="583.8" x2="521.5" y2="577.3" stroke="#1a4e8e" stroke-width="2"/>
<line x1="537.7" y1="583.8" x2="537.7" y2="573.4" stroke="#1a4e8e" stroke-width="2"/>
<line x1="554.6" y1="583.8" x2="554.6" y2="574.2" stroke="#1a4e8e" stroke-width="2"/>
<line x1="571.5" y1="583.8" x2="571.5" y2="577.3" stroke="#1a4e8e" stroke-width="2"/>
<line x1="587.9" y1="583.8" x2="587.9" y2="582" stroke="#1a4e8e" stroke-width="2"/>
<line x1="604.9" y1="583.8" x2="604.9" y2="582.8" stroke="#1a4e8e" stroke-width="2"/>
<line x1="638.7" y1="583.8" x2="638.7" y2="585.4" stroke="#1a4e8e" stroke-width="2"/>
<line x1="671.3" y1="583.8" x2="671.3" y2="584.6" stroke="#1a4e8e" stroke-width="2"/>
<line x1="688.2" y1="583.8" x2="688.2" y2="585.4" stroke="#1a4e8e" stroke-width="2"/>
<line x1="705.1" y1="583.8" x2="705.1" y2="585.4" stroke="#1a4e8e" stroke-width="2"/>
<line x1="722.0" y1="583.8" x2="722.0" y2="580.2" stroke="#1a4e8e" stroke-width="2"/>
<line x1="739.0" y1="583.8" x2="739.0" y2="577.3" stroke="#1a4e8e" stroke-width="2"/>
<line x1="755.4" y1="583.8" x2="755.4" y2="573.4" stroke="#1a4e8e" stroke-width="2"/>
<line x1="772.2" y1="583.8" x2="772.2" y2="572.6" stroke="#1a4e8e" stroke-width="2"/>
<line x1="788.8" y1="583.8" x2="788.8" y2="574.2" stroke="#1a4e8e" stroke-width="2"/>
<line x1="805.2" y1="583.8" x2="805.2" y2="576.25" stroke="#1a4e8e" stroke-width="2"/>
<line x1="821.6" y1="583.8" x2="821.6" y2="574.7" stroke="#1a4e8e" stroke-width="2"/>
<line x1="838.5" y1="583.8" x2="838.5" y2="572.9" stroke="#1a4e8e" stroke-width="2"/>
<line x1="855.4" y1="583.8" x2="855.4" y2="569.5" stroke="#1a4e8e" stroke-width="2"/>
<line x1="872.1" y1="583.8" x2="872.1" y2="566.9" stroke="#1a4e8e" stroke-width="2"/>
<line x1="888.8" y1="583.8" x2="888.8" y2="565" stroke="#1a4e8e" stroke-width="2"/>
<line x1="905.4" y1="583.8" x2="905.4" y2="564.3" stroke="#1a4e8e" stroke-width="2"/>
<line x1="922.4" y1="583.8" x2="922.4" y2="561.1" stroke="#1a4e8e" stroke-width="2"/>
<line x1="938.5" y1="583.8" x2="938.5" y2="556.7" stroke="#1a4e8e" stroke-width="2"/>
<line x1="954.9" y1="583.8" x2="954.9" y2="557.8" stroke="#1a4e8e" stroke-width="2"/>
<line x1="971.8" y1="583.8" x2="971.8" y2="559.8" stroke="#1a4e8e" stroke-width="2"/>
<line x1="988.8" y1="583.8" x2="988.8" y2="561.1" stroke="#1a4e8e" stroke-width="2"/>
<line x1="1005.6" y1="583.8" x2="1005.6" y2="561.7" stroke="#1a4e8e" stroke-width="2"/>
<line x1="1022.1" y1="583.8" x2="1022.1" y2="567.7" stroke="#1a4e8e" stroke-width="2"/>
<line x1="1039.0" y1="583.8" x2="1039.0" y2="573.4" stroke="#1a4e8e" stroke-width="2"/>
<line x1="1055.6" y1="583.8" x2="1055.6" y2="576" stroke="#1a4e8e" stroke-width="2"/>
<line x1="1072.1" y1="583.8" x2="1072.1" y2="581.2" stroke="#1a4e8e" stroke-width="2"/>
<line x1="1089.0" y1="583.8" x2="1089.0" y2="586.4" stroke="#1a4e8e" stroke-width="2"/>
<line x1="1105.4" y1="583.8" x2="1105.4" y2="591.6" stroke="#1a4e8e" stroke-width="2"/>
<line x1="1122.4" y1="583.8" x2="1122.4" y2="595.8" stroke="#1a4e8e" stroke-width="2"/>
<line x1="1139.0" y1="583.8" x2="1139.0" y2="595" stroke="#1a4e8e" stroke-width="2"/>
<line x1="1155.9" y1="583.8" x2="1155.9" y2="592.4" stroke="#1a4e8e" stroke-width="2"/>
<line x1="1172.6" y1="583.8" x2="1172.6" y2="593.2" stroke="#1a4e8e" stroke-width="2"/>
<line x1="1189.6" y1="583.8" x2="1189.6" y2="595.5" stroke="#1a4e8e" stroke-width="2"/>
<line x1="1206.4" y1="583.8" x2="1206.4" y2="596.8" stroke="#1a4e8e" stroke-width="2"/>
<line x1="1222.3" y1="583.8" x2="1222.3" y2="595.8" stroke="#1a4e8e" stroke-width="2"/>
<line x1="1239.2" y1="583.8" x2="1239.2" y2="595.5" stroke="#1a4e8e" stroke-width="2"/>
<line x1="1255.9" y1="583.8" x2="1255.9" y2="594.5" stroke="#1a4e8e" stroke-width="2"/>
<line x1="1272.8" y1="583.8" x2="1272.8" y2="594.2" stroke="#1a4e8e" stroke-width="2"/>
<line x1="1289.2" y1="583.8" x2="1289.2" y2="593.2" stroke="#1a4e8e" stroke-width="2"/>
<line x1="1306.2" y1="583.8" x2="1306.2" y2="590.3" stroke="#1a4e8e" stroke-width="2"/>
<line x1="1323.1" y1="583.8" x2="1323.1" y2="589.8" stroke="#1a4e8e" stroke-width="2"/>
<line x1="1340.0" y1="583.8" x2="1340.0" y2="587.2" stroke="#1a4e8e" stroke-width="2"/>
<line x1="1356.4" y1="583.8" x2="1356.4" y2="587.2" stroke="#1a4e8e" stroke-width="2"/>
<line x1="1372.6" y1="583.8" x2="1372.6" y2="587.2" stroke="#1a4e8e" stroke-width="2"/>
<line x1="1389.6" y1="583.8" x2="1389.6" y2="585.1" stroke="#1a4e8e" stroke-width="2"/>
<polyline points="14.3,555.6 23.4,559.5 36.5,567.3 54.7,577.8 70.3,586.9 88.5,594.7 104.2,599.2 117.0,599.2 156.0,597.9 173.0,596.6 188.8,597.3 203.1,598.6 221.4,601.5 250.0,605.4 307.3,605.4 338.5,602.8 380.0,602.8 406.0,603.3 437.3,604.9 471.1,606.7 505.0,606.7 525.8,604.1 557.0,599.4 588.3,597.6 630.0,598.1 674.3,598.1 710.7,598.9 739.4,595.8 760.0,593.7 786.0,589.8 825.0,583.8 856.4,577.3 890.2,567.7 921.5,558.5 942.3,549.4 973.5,539.0 1004.8,527.8 1023.0,522.6 1056.9,518.7 1082.9,518.2 1119.4,522.9 1140.2,526.8 1162.0,528.6 1188.0,533.3 1219.3,539.8 1250.6,545.0 1289.6,550.7 1323.5,553.3 1360.0,554.6 1390.0,555.9" fill="none" stroke="#ff1a1a" stroke-width="2" stroke-linejoin="round"/>
<polyline points="14.3,578.4 20.8,588.8 37.8,606.4 54.7,618.1 70.3,624.6 88.5,624.6 104.2,614.9 122.4,601.2 138.0,596.0 156.2,592.7 170.6,592.7 184.9,598.6 205.7,605.9 220.0,611.9 257.8,611.9 276.0,606.7 304.7,604.1 323.0,598.1 337.2,598.1 351.6,601.5 369.8,602.0 388.0,603.3 406.0,604.1 419.0,605.4 436.0,609.3 492.0,609.3 505.0,606.0 520.6,598.9 538.9,591.6 554.5,590.6 572.7,591.9 591.0,596.8 622.2,596.8 632.6,598.1 671.7,598.1 674.3,599.4 708.0,599.4 721.1,595.0 739.4,590.3 755.0,583.8 772.5,579.4 806.9,579.4 838.1,570.3 869.4,557.2 905.8,543.4 922.8,535.1 939.7,524.2 958.0,518.2 989.2,509.1 1006.0,505.7 1023.0,507.2 1041.2,510.9 1055.6,511.1 1085.5,519.5 1106.4,527.3 1123.3,535.6 1135.0,537.2 1156.8,537.2 1175.0,540.8 1206.3,549.4 1240.2,554.6 1271.4,558.0 1284.4,559.1 1297.5,559.1 1307.9,557.8 1334.0,557.2 1390.0,557.2" fill="none" stroke="#0d4d0d" stroke-width="2" stroke-linejoin="round"/>
</g>
<rect x="14.0" y="478.0" width="935.0" height="18.0" fill="#fff"/>
<text x="19.7" y="494.2" font-size="13.8" fill="#2a5d96" textLength="446.9" lengthAdjust="spacingAndGlyphs" xml:space="preserve">MACDF, EUR=, Bid(Last),  12, 26, 9, Exponential, 13/07/2020, -0.0003,</text>
<text x="470.0" y="494.2" font-size="13.8" fill="#1e5a1e" textLength="433.3" lengthAdjust="spacingAndGlyphs" xml:space="preserve">MACD, EUR=, Bid(Last),  12, 26, 9, Exponential, 13/07/2020, 0.0041,</text>
<text x="907.3" y="494.2" font-size="13.8" fill="#ff2020" textLength="42.1" lengthAdjust="spacingAndGlyphs" xml:space="preserve">0.0043</text>
<g clip-path="url(#cp4)">
<line x1="13" y1="669.6" x2="1469" y2="669.6" stroke="#a03030" stroke-width="1.2"/>
<line x1="13" y1="700.3" x2="1469" y2="700.3" stroke="#a03030" stroke-width="1.2"/>
<polyline points="14.3,700.3 22.1,704.2 39.0,706.0 54.7,706.8 62.5,706.8 88.5,700.3 122.4,686.0 139.3,681.6 156.2,680.8 162.8,680.8 221.4,693.0 250.0,689.9 273.4,684.2 286.5,684.2 312.5,684.2 338.5,687.8 369.8,693.8 390.6,693.8 406.0,691.7 419.0,692.5 439.1,698.2 461.2,698.2 471.7,696.2 489.9,690.4 504.2,688.0 514.6,682.6 534.2,672.8 539.4,669.8 555.0,669.8 573.2,679.3 588.9,688.7 603.2,693.4 622.7,693.4 671.7,692.3 679.5,694.5 700.3,698.2 709.4,698.4 721.1,695.6 740.7,685.2 756.3,674.7 771.9,672.1 781.0,672.4 790.2,674.1 804.5,678.0 812.3,677.6 830.0,673.4 856.4,663.1 890.2,662.6 926.7,661.2 942.3,661.8 973.5,666.5 994.4,666.5 1020.4,665.7 1046.5,670.4 1088.0,676.9 1124.6,693.3 1140.2,695.1 1143.8,695.1 1156.8,691.2 1172.5,689.9 1188.0,691.7 1207.6,698.2 1237.6,698.2 1258.4,692.5 1289.6,688.6 1307.9,683.4 1323.5,679.5 1340.4,671.7 1357.4,676.1 1380.8,675.6 1390.0,676.9" fill="none" stroke="#800000" stroke-width="2" stroke-linejoin="round"/>
<polyline points="15.6,694.6 31.2,699.8 54.7,705.5 86.0,703.4 117.2,693.8 140.6,686.0 169.3,681.3 190.0,682.9 221.4,689.9 250.0,691.2 286.5,687.3 312.5,684.2 338.5,686.0 369.8,691.7 390.6,693.0 419.0,692.5 430.0,693.0 453.4,695.6 473.0,696.2 487.3,695.6 502.9,692.3 521.1,685.8 539.4,678.0 558.9,672.8 573.2,673.4 592.8,681.9 612.3,689.7 625.3,692.7 671.7,692.3 687.3,693.6 708.1,696.2 723.8,695.6 734.2,693.6 760.2,684.5 773.2,678.0 788.9,673.4 803.2,673.8 816.2,676.0 838.1,674.8 864.2,667.8 890.2,663.1 916.2,662.0 947.5,661.2 973.5,663.9 1020.4,665.7 1046.5,668.5 1088.0,674.3 1119.4,686.0 1140.2,692.5 1154.2,692.5 1188.0,691.7 1214.1,694.6 1235.0,697.7 1261.0,695.1 1292.2,690.4 1323.5,683.4 1341.7,677.7 1357.4,676.1 1378.2,675.0 1390.0,676.1" fill="none" stroke="#0000ff" stroke-width="2" stroke-linejoin="round" stroke-dasharray="5,3"/>
</g>
<rect x="14.0" y="634.5" width="412.0" height="20.0" fill="#fff"/>
<text x="19.7" y="650.8" font-size="13.8" fill="#8b2a2a" textLength="359.8" lengthAdjust="spacingAndGlyphs" xml:space="preserve">StochS, EUR=, Bid,  14, 3, Simple, 3, 13/07/2020, 64.352,</text>
<text x="384.3" y="650.8" font-size="13.8" fill="#3030ff" textLength="41.9" lengthAdjust="spacingAndGlyphs" xml:space="preserve">66.651</text>
<rect x="13.5" y="32.5" width="1456" height="683.5" fill="none" stroke="#8c8c8c" stroke-width="1"/>
<line x1="2" y1="358.5" x2="1534" y2="358.5" stroke="#8c8c8c" stroke-width="1"/>
<line x1="2" y1="477.5" x2="1534" y2="477.5" stroke="#8c8c8c" stroke-width="1"/>
<line x1="2" y1="634.3" x2="1534" y2="634.3" stroke="#8c8c8c" stroke-width="1"/>
<line x1="21.5" y1="717" x2="21.5" y2="720.5" stroke="#303030" stroke-width="1"/>
<line x1="38.5" y1="717" x2="38.5" y2="720.5" stroke="#303030" stroke-width="1"/>
<line x1="54.5" y1="717" x2="54.5" y2="720.5" stroke="#303030" stroke-width="1"/>
<line x1="71.5" y1="717" x2="71.5" y2="720.5" stroke="#303030" stroke-width="1"/>
<line x1="88.5" y1="717" x2="88.5" y2="720.5" stroke="#303030" stroke-width="1"/>
<line x1="105.5" y1="717" x2="105.5" y2="720.5" stroke="#303030" stroke-width="1"/>
<line x1="121.5" y1="717" x2="121.5" y2="720.5" stroke="#303030" stroke-width="1"/>
<line x1="138.5" y1="717" x2="138.5" y2="720.5" stroke="#303030" stroke-width="1"/>
<line x1="155.5" y1="717" x2="155.5" y2="720.5" stroke="#303030" stroke-width="1"/>
<line x1="171.5" y1="717" x2="171.5" y2="720.5" stroke="#303030" stroke-width="1"/>
<line x1="188.5" y1="717" x2="188.5" y2="720.5" stroke="#303030" stroke-width="1"/>
<line x1="205.5" y1="717" x2="205.5" y2="720.5" stroke="#303030" stroke-width="1"/>
<line x1="221.5" y1="717" x2="221.5" y2="720.5" stroke="#303030" stroke-width="1"/>
<line x1="238.5" y1="717" x2="238.5" y2="720.5" stroke="#303030" stroke-width="1"/>
<line x1="255.5" y1="717" x2="255.5" y2="720.5" stroke="#303030" stroke-width="1"/>
<line x1="272.5" y1="717" x2="272.5" y2="720.5" stroke="#303030" stroke-width="1"/>
<line x1="288.5" y1="717" x2="288.5" y2="720.5" stroke="#303030" stroke-width="1"/>
<line x1="305.5" y1="717" x2="305.5" y2="720.5" stroke="#303030" stroke-width="1"/>
<line x1="322.5" y1="717" x2="322.5" y2="720.5" stroke="#303030" stroke-width="1"/>
<line x1="338.5" y1="717" x2="338.5" y2="720.5" stroke="#303030" stroke-width="1"/>
<line x1="355.5" y1="717" x2="355.5" y2="720.5" stroke="#303030" stroke-width="1"/>
<line x1="372.5" y1="717" x2="372.5" y2="720.5" stroke="#303030" stroke-width="1"/>
<line x1="388.5" y1="717" x2="388.5" y2="720.5" stroke="#303030" stroke-width="1"/>
<line x1="405.5" y1="717" x2="405.5" y2="720.5" stroke="#303030" stroke-width="1"/>
<line x1="422.5" y1="717" x2="422.5" y2="720.5" stroke="#303030" stroke-width="1"/>
<line x1="439.5" y1="717" x2="439.5" y2="720.5" stroke="#303030" stroke-width="1"/>
<line x1="455.5" y1="717" x2="455.5" y2="720.5" stroke="#303030" stroke-width="1"/>
<line x1="472.5" y1="717" x2="472.5" y2="720.5" stroke="#303030" stroke-width="1"/>
<line x1="489.5" y1="717" x2="489.5" y2="720.5" stroke="#303030" stroke-width="1"/>
<line x1="505.5" y1="717" x2="505.5" y2="720.5" stroke="#303030" stroke-width="1"/>
<line x1="522.5" y1="717" x2="522.5" y2="720.5" stroke="#303030" stroke-width="1"/>
<line x1="539.5" y1="717" x2="539.5" y2="720.5" stroke="#303030" stroke-width="1"/>
<line x1="555.5" y1="717" x2="555.5" y2="720.5" stroke="#303030" stroke-width="1"/>
<line x1="572.5" y1="717" x2="572.5" y2="720.5" stroke="#303030" stroke-width="1"/>
<line x1="589.5" y1="717" x2="589.5" y2="720.5" stroke="#303030" stroke-width="1"/>
<line x1="606.5" y1="717" x2="606.5" y2="720.5" stroke="#303030" stroke-width="1"/>
<line x1="622.5" y1="717" x2="622.5" y2="720.5" stroke="#303030" stroke-width="1"/>
<line x1="639.5" y1="717" x2="639.5" y2="720.5" stroke="#303030" stroke-width="1"/>
<line x1="656.5" y1="717" x2="656.5" y2="720.5" stroke="#303030" stroke-width="1"/>
<line x1="672.5" y1="717" x2="672.5" y2="720.5" stroke="#303030" stroke-width="1"/>
<line x1="689.5" y1="717" x2="689.5" y2="720.5" stroke="#303030" stroke-width="1"/>
<line x1="706.5" y1="717" x2="706.5" y2="720.5" stroke="#303030" stroke-width="1"/>
<line x1="722.5" y1="717" x2="722.5" y2="720.5" stroke="#303030" stroke-width="1"/>
<line x1="739.5" y1="717" x2="739.5" y2="720.5" stroke="#303030" stroke-width="1"/>
<line x1="756.5" y1="717" x2="756.5" y2="720.5" stroke="#303030" stroke-width="1"/>
<line x1="773.5" y1="717" x2="773.5" y2="720.5" stroke="#303030" stroke-width="1"/>
<line x1="789.5" y1="717" x2="789.5" y2="720.5" stroke="#303030" stroke-width="1"/>
<line x1="806.5" y1="717" x2="806.5" y2="720.5" stroke="#303030" stroke-width="1"/>
<line x1="823.5" y1="717" x2="823.5" y2="720.5" stroke="#303030" stroke-width="1"/>
<line x1="839.5" y1="717" x2="839.5" y2="720.5" stroke="#303030" stroke-width="1"/>
<line x1="856.5" y1="717" x2="856.5" y2="720.5" stroke="#303030" stroke-width="1"/>
<line x1="873.5" y1="717" x2="873.5" y2="720.5" stroke="#303030" stroke-width="1"/>
<line x1="889.5" y1="717" x2="889.5" y2="720.5" stroke="#303030" stroke-width="1"/>
<line x1="906.5" y1="717" x2="906.5" y2="720.5" stroke="#303030" stroke-width="1"/>
<line x1="923.5" y1="717" x2="923.5" y2="720.5" stroke="#303030" stroke-width="1"/>
<line x1="940.5" y1="717" x2="940.5" y2="720.5" stroke="#303030" stroke-width="1"/>
<line x1="956.5" y1="717" x2="956.5" y2="720.5" stroke="#303030" stroke-width="1"/>
<line x1="973.5" y1="717" x2="973.5" y2="720.5" stroke="#303030" stroke-width="1"/>
<line x1="990.5" y1="717" x2="990.5" y2="720.5" stroke="#303030" stroke-width="1"/>
<line x1="1006.5" y1="717" x2="1006.5" y2="720.5" stroke="#303030" stroke-width="1"/>
<line x1="1023.5" y1="717" x2="1023.5" y2="720.5" stroke="#303030" stroke-width="1"/>
<line x1="1040.5" y1="717" x2="1040.5" y2="720.5" stroke="#303030" stroke-width="1"/>
<line x1="1056.5" y1="717" x2="1056.5" y2="720.5" stroke="#303030" stroke-width="1"/>
<line x1="1073.5" y1="717" x2="1073.5" y2="720.5" stroke="#303030" stroke-width="1"/>
<line x1="1090.5" y1="717" x2="1090.5" y2="720.5" stroke="#303030" stroke-width="1"/>
<line x1="1107.5" y1="717" x2="1107.5" y2="720.5" stroke="#303030" stroke-width="1"/>
<line x1="1123.5" y1="717" x2="1123.5" y2="720.5" stroke="#303030" stroke-width="1"/>
<line x1="1140.5" y1="717" x2="1140.5" y2="720.5" stroke="#303030" stroke-width="1"/>
<line x1="1157.5" y1="717" x2="1157.5" y2="720.5" stroke="#303030" stroke-width="1"/>
<line x1="1173.5" y1="717" x2="1173.5" y2="720.5" stroke="#303030" stroke-width="1"/>
<line x1="1190.5" y1="717" x2="1190.5" y2="720.5" stroke="#303030" stroke-width="1"/>
<line x1="1207.5" y1="717" x2="1207.5" y2="720.5" stroke="#303030" stroke-width="1"/>
<line x1="1223.5" y1="717" x2="1223.5" y2="720.5" stroke="#303030" stroke-width="1"/>
<line x1="1240.5" y1="717" x2="1240.5" y2="720.5" stroke="#303030" stroke-width="1"/>
<line x1="1257.5" y1="717" x2="1257.5" y2="720.5" stroke="#303030" stroke-width="1"/>
<line x1="1274.5" y1="717" x2="1274.5" y2="720.5" stroke="#303030" stroke-width="1"/>
<line x1="1290.5" y1="717" x2="1290.5" y2="720.5" stroke="#303030" stroke-width="1"/>
<line x1="1307.5" y1="717" x2="1307.5" y2="720.5" stroke="#303030" stroke-width="1"/>
<line x1="1324.5" y1="717" x2="1324.5" y2="720.5" stroke="#303030" stroke-width="1"/>
<line x1="1340.5" y1="717" x2="1340.5" y2="720.5" stroke="#303030" stroke-width="1"/>
<line x1="1357.5" y1="717" x2="1357.5" y2="720.5" stroke="#303030" stroke-width="1"/>
<line x1="1374.5" y1="717" x2="1374.5" y2="720.5" stroke="#303030" stroke-width="1"/>
<line x1="1390.5" y1="717" x2="1390.5" y2="720.5" stroke="#303030" stroke-width="1"/>
<line x1="1407.5" y1="717" x2="1407.5" y2="720.5" stroke="#303030" stroke-width="1"/>
<line x1="1424.5" y1="717" x2="1424.5" y2="720.5" stroke="#303030" stroke-width="1"/>
<line x1="1441.5" y1="717" x2="1441.5" y2="720.5" stroke="#303030" stroke-width="1"/>
<line x1="1457.5" y1="717" x2="1457.5" y2="720.5" stroke="#303030" stroke-width="1"/>
<text x="42.2" y="742.8" font-size="23.4" fill="#000000" textLength="25.0" lengthAdjust="spacingAndGlyphs" xml:space="preserve">23</text>
<text x="125.7" y="742.8" font-size="23.4" fill="#000000" textLength="25.0" lengthAdjust="spacingAndGlyphs" xml:space="preserve">30</text>
<text x="209.2" y="742.8" font-size="23.4" fill="#000000" textLength="25.0" lengthAdjust="spacingAndGlyphs" xml:space="preserve">06</text>
<text x="292.7" y="742.8" font-size="23.4" fill="#000000" textLength="25.0" lengthAdjust="spacingAndGlyphs" xml:space="preserve">13</text>
<text x="376.2" y="742.8" font-size="23.4" fill="#000000" textLength="25.0" lengthAdjust="spacingAndGlyphs" xml:space="preserve">20</text>
<text x="459.7" y="742.8" font-size="23.4" fill="#000000" textLength="25.0" lengthAdjust="spacingAndGlyphs" xml:space="preserve">27</text>
<text x="543.2" y="742.8" font-size="23.4" fill="#000000" textLength="25.0" lengthAdjust="spacingAndGlyphs" xml:space="preserve">04</text>
<text x="626.7" y="742.8" font-size="23.4" fill="#000000" textLength="25.0" lengthAdjust="spacingAndGlyphs" xml:space="preserve">11</text>
<text x="710.2" y="742.8" font-size="23.4" fill="#000000" textLength="25.0" lengthAdjust="spacingAndGlyphs" xml:space="preserve">18</text>
<text x="793.7" y="742.8" font-size="23.4" fill="#000000" textLength="25.0" lengthAdjust="spacingAndGlyphs" xml:space="preserve">25</text>
<text x="877.2" y="742.8" font-size="23.4" fill="#000000" textLength="25.0" lengthAdjust="spacingAndGlyphs" xml:space="preserve">01</text>
<text x="960.7" y="742.8" font-size="23.4" fill="#000000" textLength="25.0" lengthAdjust="spacingAndGlyphs" xml:space="preserve">08</text>
<text x="1044.2" y="742.8" font-size="23.4" fill="#000000" textLength="25.0" lengthAdjust="spacingAndGlyphs" xml:space="preserve">15</text>
<text x="1127.7" y="742.8" font-size="23.4" fill="#000000" textLength="25.0" lengthAdjust="spacingAndGlyphs" xml:space="preserve">22</text>
<text x="1211.2" y="742.8" font-size="23.4" fill="#000000" textLength="25.0" lengthAdjust="spacingAndGlyphs" xml:space="preserve">29</text>
<text x="1294.7" y="742.8" font-size="23.4" fill="#000000" textLength="25.0" lengthAdjust="spacingAndGlyphs" xml:space="preserve">06</text>
<text x="1378.2" y="742.8" font-size="23.4" fill="#000000" textLength="25.0" lengthAdjust="spacingAndGlyphs" xml:space="preserve">13</text>
<text x="22.3" y="771.7" font-size="23.8" fill="#000000" font-weight="bold" textLength="139.3" lengthAdjust="spacingAndGlyphs" xml:space="preserve">March 2020</text>
<text x="293.7" y="771.7" font-size="23.8" fill="#000000" font-weight="bold" textLength="121.5" lengthAdjust="spacingAndGlyphs" xml:space="preserve">April 2020</text>
<text x="656.7" y="771.7" font-size="23.8" fill="#000000" font-weight="bold" textLength="114.5" lengthAdjust="spacingAndGlyphs" xml:space="preserve">May 2020</text>
<text x="1009.9" y="771.7" font-size="23.8" fill="#000000" font-weight="bold" textLength="124.4" lengthAdjust="spacingAndGlyphs" xml:space="preserve">June 2020</text>
<text x="1304.7" y="771.7" font-size="23.8" fill="#000000" font-weight="bold" textLength="115.2" lengthAdjust="spacingAndGlyphs" xml:space="preserve">July 2020</text>
<line x1="171.5" y1="749" x2="171.5" y2="777" stroke="#404040" stroke-width="1.3"/>
<line x1="538.5" y1="749" x2="538.5" y2="777" stroke="#404040" stroke-width="1.3"/>
<line x1="889.5" y1="749" x2="889.5" y2="777" stroke="#404040" stroke-width="1.3"/>
<line x1="1256.5" y1="749" x2="1256.5" y2="777" stroke="#404040" stroke-width="1.3"/>
<line x1="1475" y1="279" x2="1475" y2="279" stroke="#000" stroke-width="1"/>
<line x1="1469" y1="279.3" x2="1474" y2="279.3" stroke="#333" stroke-width="1.2"/>
<line x1="1469" y1="344.5" x2="1476" y2="344.5" stroke="#000" stroke-width="1"/>
<text x="1473.8" y="60.6" font-size="14.5" fill="#000" font-weight="bold" textLength="35.8" lengthAdjust="spacingAndGlyphs" xml:space="preserve">Price</text>
<text x="1473.8" y="80.0" font-size="14.5" fill="#000" font-weight="bold" textLength="29.8" lengthAdjust="spacingAndGlyphs" xml:space="preserve">USD</text>
<text x="1477.2" y="287.8" font-size="23.2" fill="#000" textLength="43.1" lengthAdjust="spacingAndGlyphs" xml:space="preserve">1.08</text>
<text x="1477.4" y="155.1" font-size="23.2" fill="#000" textLength="42.4" lengthAdjust="spacingAndGlyphs" xml:space="preserve">1.12</text>
<clipPath id="axc"><rect x="1469" y="0" width="64.5" height="801"/></clipPath>
<g clip-path="url(#axc)">
<rect x="1469.0" y="92.0" width="64.5" height="28.0" fill="#000000"/>
<text x="1469.5" y="114.8" font-size="22.3" fill="#fff" font-weight="bold" textLength="85" lengthAdjust="spacingAndGlyphs">1.1324</text>
<rect x="1469.0" y="120.0" width="64.5" height="28.2" fill="#008000"/>
<text x="1469.5" y="143.2" font-size="22.3" fill="#fff">1.1260</text>
<rect x="1469.0" y="163.0" width="64.5" height="28.4" fill="#ff0000"/>
<text x="1469.5" y="185.5" font-size="22.3" fill="#000">1.1106</text>
<rect x="1469.0" y="191.4" width="64.5" height="28.1" fill="#000000"/>
<text x="1469.5" y="213.5" font-size="22.3" fill="#fff">1.1041</text>
<rect x="1469.0" y="219.5" width="64.5" height="28.8" fill="#0d3f80"/>
<text x="1469.5" y="242" font-size="22.3" fill="#fff">1.1033</text>
</g>
<rect x="1475.5" y="342.5" width="34.5" height="16" fill="#fff" stroke="#000" stroke-width="1"/>
<text x="1476.4" y="355.5" font-size="14.5" fill="#000" font-weight="bold" textLength="32.7" lengthAdjust="spacingAndGlyphs" xml:space="preserve">Auto</text>
<text x="1473.4" y="388.3" font-size="14.5" fill="#c8c8c8" font-weight="bold" textLength="40.2" lengthAdjust="spacingAndGlyphs" xml:space="preserve">Value</text>
<text x="1473.4" y="407.0" font-size="14.5" fill="#c8c8c8" font-weight="bold" textLength="30.2" lengthAdjust="spacingAndGlyphs" xml:space="preserve">USD</text>
<text x="1475.4" y="436.0" font-size="20.6" fill="#000" textLength="25.2" lengthAdjust="spacingAndGlyphs" xml:space="preserve">50</text>
<g clip-path="url(#axc)">
<rect x="1469.0" y="408.0" width="64.5" height="24.0" fill="#000080"/>
<text x="1469.5" y="428" font-size="20.6" fill="#fff" font-weight="bold" textLength="72.7" lengthAdjust="spacingAndGlyphs">59.330</text>
</g>
<line x1="1469" y1="469.5" x2="1476" y2="469.5" stroke="#000" stroke-width="1"/>
<rect x="1475.5" y="459.5" width="35" height="16.5" fill="none" stroke="#d0d0d0" stroke-width="1"/>
<text x="1476.4" y="473.0" font-size="14.5" fill="#d0d0d0" font-weight="bold" textLength="32.7" lengthAdjust="spacingAndGlyphs" xml:space="preserve">Auto</text>
<text x="1473.4" y="507.0" font-size="14.5" fill="#c8c8c8" font-weight="bold" textLength="40.2" lengthAdjust="spacingAndGlyphs" xml:space="preserve">Value</text>
<text x="1473.4" y="526.0" font-size="14.5" fill="#c8c8c8" font-weight="bold" textLength="30.2" lengthAdjust="spacingAndGlyphs" xml:space="preserve">USD</text>
<g clip-path="url(#axc)">
<rect x="1469.0" y="521.6" width="64.5" height="23.9" fill="#ff0000"/>
<text x="1469.5" y="541" font-size="20.6" fill="#000" textLength="61" lengthAdjust="spacingAndGlyphs">0.0043</text>
<rect x="1469.0" y="545.5" width="64.5" height="24.2" fill="#003a00"/>
<text x="1469.5" y="565" font-size="20.6" fill="#fff" textLength="61" lengthAdjust="spacingAndGlyphs">0.0041</text>
<rect x="1469.0" y="573.6" width="64.5" height="24.0" fill="#124a8a"/>
<text x="1469.5" y="592.5" font-size="20.6" fill="#fff" font-weight="bold" textLength="80" lengthAdjust="spacingAndGlyphs">-0.0003</text>
</g>
<line x1="1469" y1="616.5" x2="1476" y2="616.5" stroke="#000" stroke-width="1"/>
<rect x="1475.5" y="616.5" width="35" height="16.5" fill="none" stroke="#d0d0d0" stroke-width="1"/>
<text x="1476.4" y="630.0" font-size="14.5" fill="#d0d0d0" font-weight="bold" textLength="32.7" lengthAdjust="spacingAndGlyphs" xml:space="preserve">Auto</text>
<g clip-path="url(#axc)">
<rect x="1469.0" y="641.0" width="64.5" height="23.4" fill="#0000ff"/>
<text x="1469.5" y="660" font-size="20.6" fill="#000" textLength="61" lengthAdjust="spacingAndGlyphs">66.651</text>
<rect x="1469.0" y="664.4" width="64.5" height="24.2" fill="#800000"/>
<text x="1469.5" y="684" font-size="20.6" fill="#fff" font-weight="bold" textLength="72.7" lengthAdjust="spacingAndGlyphs">64.352</text>
</g>
<rect x="1475.5" y="699.5" width="35" height="16" fill="none" stroke="#d0d0d0" stroke-width="1"/>
<text x="1476.4" y="712.5" font-size="14.5" fill="#d0d0d0" font-weight="bold" textLength="32.7" lengthAdjust="spacingAndGlyphs" xml:space="preserve">Auto</text>
</svg></body></html>
